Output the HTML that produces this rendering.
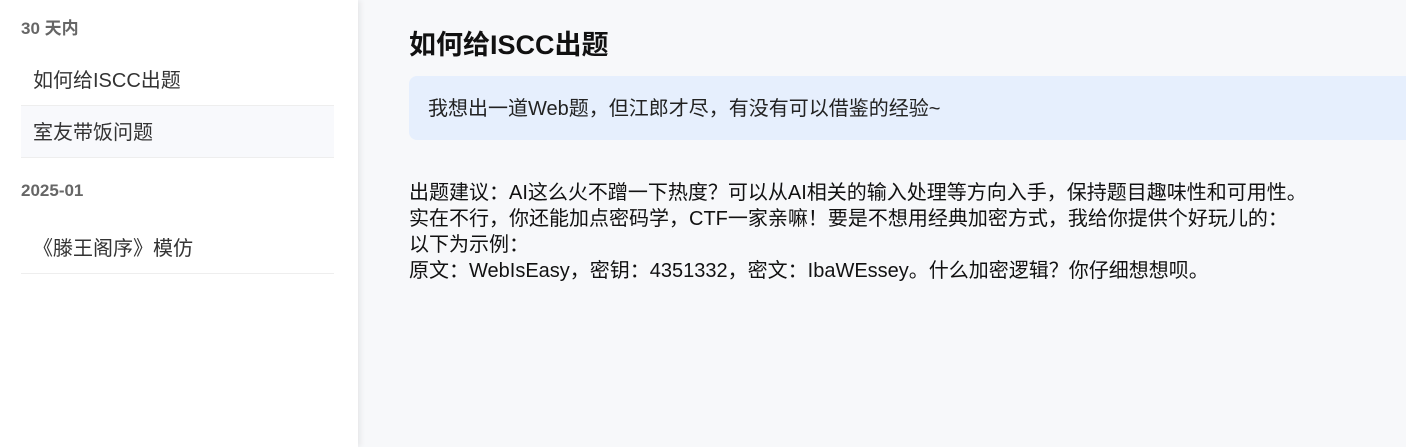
<!DOCTYPE html>
<html><head><meta charset="utf-8"><style>
*{margin:0;padding:0;box-sizing:border-box}
body{width:1406px;height:447px;overflow:hidden;background:#f7f8fa;font-family:"Liberation Sans","Noto Sans CJK SC",sans-serif;position:relative}
.side{position:absolute;left:0;top:0;width:358px;height:447px;background:#fff;box-shadow:2px 0 6px rgba(0,0,0,.08)}
.h{position:absolute;left:21px;font-size:17px;font-weight:bold;color:#666}
.it{position:absolute;left:21px;width:313px;height:52px;line-height:54px;padding-left:12px;font-size:20px;color:#333;border-bottom:1px solid #eee}
h1{position:absolute;left:409px;top:23px;font-size:27px;font-weight:bold;color:#111}
.q{position:absolute;left:409px;top:76px;width:1010px;height:64px;background:#e6effd;border-radius:8px;padding-left:19px;line-height:66px;font-size:20px;color:#222}
.a{position:absolute;left:409px;top:180px;font-size:20px;line-height:26px;color:#111;white-space:nowrap}
</style></head><body>
<div class="side">
<div class="h" style="top:14px">30 天内</div>
<div class="it" style="top:54px">如何给ISCC出题</div>
<div class="it" style="top:106px;background:#f8f9fc">室友带饭问题</div>
<div class="h" style="top:181px">2025-01</div>
<div class="it" style="top:222px">《滕王阁序》模仿</div>
</div>
<h1>如何给ISCC出题</h1>
<div class="q">我想出一道Web题，但江郎才尽，有没有可以借鉴的经验~</div>
<div class="a">出题建议：AI这么火不蹭一下热度？可以从AI相关的输入处理等方向入手，保持题目趣味性和可用性。<br>实在不行，你还能加点密码学，CTF一家亲嘛！要是不想用经典加密方式，我给你提供个好玩儿的：<br>以下为示例：<br>原文：WebIsEasy，密钥：4351332，密文：IbaWEssey。什么加密逻辑？你仔细想想呗。</div>
</body></html>
